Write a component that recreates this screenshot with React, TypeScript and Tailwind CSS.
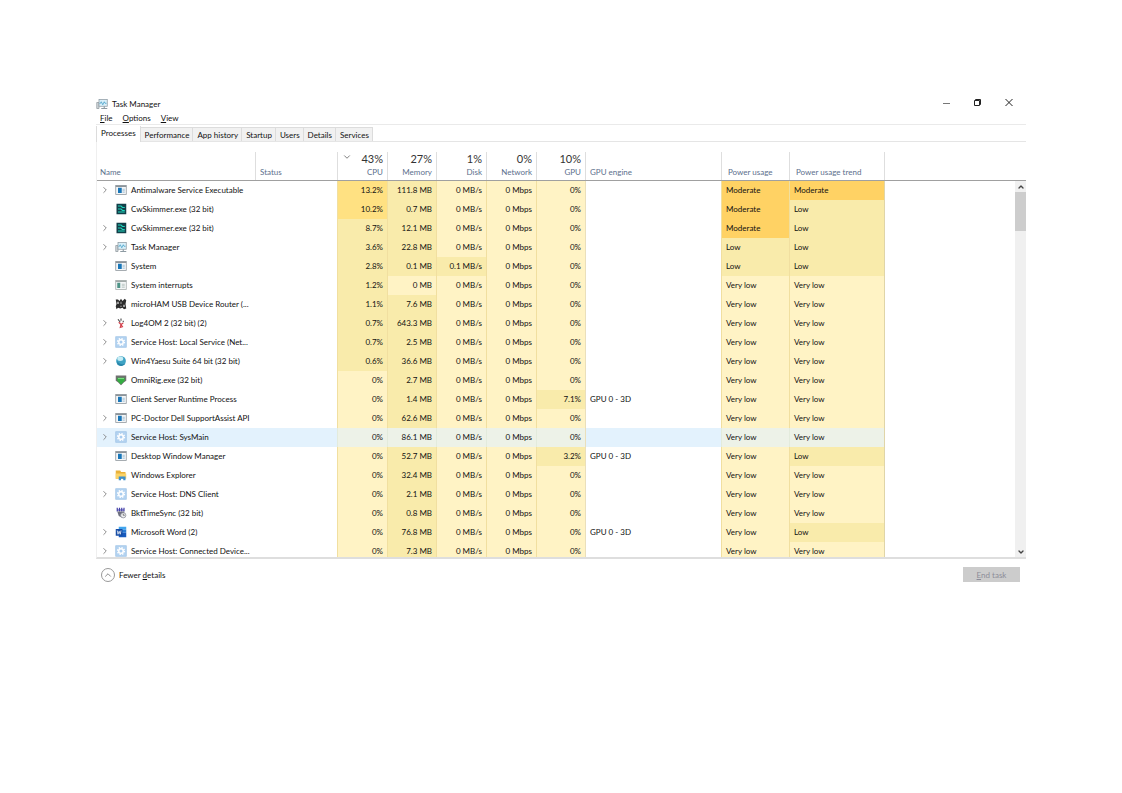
import React, { useState } from 'react';
import clsx from 'clsx';
import { ChevronDown, ChevronRight, ChevronUp } from 'lucide-react';

type IconKind =
  | 'app' | 'idle' | 'skimmer' | 'taskmgr' | 'microham' | 'log4om' | 'service'
  | 'globe' | 'omnirig' | 'folder' | 'bkt' | 'word';

type Heat = 'none' | 'low' | 'high' | 'moderate';

interface Process {
  name: string;
  icon: IconKind;
  group?: boolean;
  cpu: string;
  memory: string;
  disk?: string;
  gpu?: string;
  engine?: string;
  power?: string;
  trend?: string;
}

const processes: Process[] = [
  { name: 'Antimalware Service Executable', icon: 'app', group: true, cpu: '13.2%', memory: '111.8 MB', power: 'Moderate', trend: 'Moderate' },
  { name: 'CwSkimmer.exe (32 bit)', icon: 'skimmer', cpu: '10.2%', memory: '0.7 MB', power: 'Moderate', trend: 'Low' },
  { name: 'CwSkimmer.exe (32 bit)', icon: 'skimmer', group: true, cpu: '8.7%', memory: '12.1 MB', power: 'Moderate', trend: 'Low' },
  { name: 'Task Manager', icon: 'taskmgr', group: true, cpu: '3.6%', memory: '22.8 MB', power: 'Low', trend: 'Low' },
  { name: 'System', icon: 'app', cpu: '2.8%', memory: '0.1 MB', disk: '0.1 MB/s', power: 'Low', trend: 'Low' },
  { name: 'System interrupts', icon: 'idle', cpu: '1.2%', memory: '0 MB' },
  { name: 'microHAM USB Device Router (...', icon: 'microham', cpu: '1.1%', memory: '7.6 MB' },
  { name: 'Log4OM 2 (32 bit) (2)', icon: 'log4om', group: true, cpu: '0.7%', memory: '643.3 MB' },
  { name: 'Service Host: Local Service (Net...', icon: 'service', group: true, cpu: '0.7%', memory: '2.5 MB' },
  { name: 'Win4Yaesu Suite 64 bit (32 bit)', icon: 'globe', group: true, cpu: '0.6%', memory: '36.6 MB' },
  { name: 'OmniRig.exe (32 bit)', icon: 'omnirig', cpu: '0%', memory: '2.7 MB' },
  { name: 'Client Server Runtime Process', icon: 'app', cpu: '0%', memory: '1.4 MB', gpu: '7.1%', engine: 'GPU 0 - 3D' },
  { name: 'PC-Doctor Dell SupportAssist API', icon: 'app', group: true, cpu: '0%', memory: '62.6 MB' },
  { name: 'Service Host: SysMain', icon: 'service', group: true, cpu: '0%', memory: '86.1 MB' },
  { name: 'Desktop Window Manager', icon: 'app', cpu: '0%', memory: '52.7 MB', gpu: '3.2%', engine: 'GPU 0 - 3D', trend: 'Low' },
  { name: 'Windows Explorer', icon: 'folder', cpu: '0%', memory: '32.4 MB' },
  { name: 'Service Host: DNS Client', icon: 'service', group: true, cpu: '0%', memory: '2.1 MB' },
  { name: 'BktTimeSync (32 bit)', icon: 'bkt', cpu: '0%', memory: '0.8 MB' },
  { name: 'Microsoft Word (2)', icon: 'word', group: true, cpu: '0%', memory: '76.8 MB', gpu: '0%', engine: 'GPU 0 - 3D', trend: 'Low' },
  { name: 'Service Host: Connected Device...', icon: 'service', group: true, cpu: '0%', memory: '7.3 MB' },
];

const tabs = ['Processes', 'Performance', 'App history', 'Startup', 'Users', 'Details', 'Services'];

const heatColors: Record<Heat, string> = {
  none: 'bg-[#fff3c5]',
  low: 'bg-[#f9ebab]',
  high: 'bg-[#ffe182]',
  moderate: 'bg-[#ffd264]',
};

const usageHeat = (value: string): Heat => {
  const n = parseFloat(value);
  if (n === 0) return 'none';
  return value.endsWith('%') && n >= 10 ? 'high' : 'low';
};

const powerHeat = (value: string): Heat => {
  if (value === 'Moderate') return 'moderate';
  return value === 'Low' ? 'low' : 'none';
};

const ProcessIcon: React.FC<{ kind: IconKind }> = ({ kind }) => (
  <svg viewBox="0 0 16 16" className="h-3 w-3 shrink-0" aria-hidden="true">
    {kind === 'app' && (
      <>
        <rect x="1" y="2" width="14" height="12" fill="#f4f6f7" stroke="#8b9399" />
        <path d="M1 3h14" stroke="#8b9399" strokeWidth="2" />
        <rect x="4" y="5" width="5" height="7" fill="#1976b8" />
        <path d="M10 7h3M10 9h3M10 11h3" stroke="#8fb4cf" />
      </>
    )}
    {kind === 'idle' && (
      <>
        <rect x="1" y="2" width="14" height="12" fill="#f4f6f7" stroke="#a2aaa9" />
        <path d="M1 3h14" stroke="#a2aaa9" strokeWidth="2" />
        <rect x="3" y="5" width="4" height="7" fill="#4d9386" />
        <path d="M9 7h4M9 9h4M9 11h4" stroke="#a9b9b4" />
      </>
    )}
    {kind === 'skimmer' && (
      <>
        <rect x="2" y="1" width="13" height="14" fill="#123f49" />
        <path d="M4 4h4l2 2h3M4 8h4l2 2h3M4 12h9" stroke="#20d8be" strokeWidth="1.5" fill="none" />
      </>
    )}
    {kind === 'taskmgr' && (
      <>
        <path d="M1 6h3v8H1z" fill="#d4d9dc" stroke="#8f999f" />
        <rect x="4" y="2" width="11" height="9" fill="#d9eff9" stroke="#8d9aa2" />
        <path d="M5 8l2-3 2 4 2-4 1 2h2" stroke="#3f9cc5" fill="none" />
        <path d="M7 14h8M11 11v3" stroke="#8d9aa2" strokeWidth="1.5" />
      </>
    )}
    {kind === 'microham' && (
      <>
        <path d="M1 2h3l2 2 2-3 2 3 3-3 2 2-1 5 1 6-3 1-2-2-3 1-3-1-2 2-1-4 1-3z" fill="#2c2c2c" />
        <path d="M4 5v3M12 9v3" stroke="#efefef" strokeWidth="1.5" />
        <path d="M8 5v3M7 11h2" stroke="#c9c9c9" />
      </>
    )}
    {kind === 'log4om' && (
      <>
        <path d="M4 3l3 4M8 2v3M11 5v2" stroke="#4b4b4b" strokeWidth="1.5" />
        <path d="M5 7l3 3 3-2M8 10l-1 4 3-1-2-3" stroke="#d3404c" strokeWidth="1.5" fill="none" />
      </>
    )}
    {kind === 'service' && (
      <>
        <rect x="1" y="1" width="14" height="14" fill="#b4d3f1" stroke="#9fc2e6" />
        <circle cx="8" cy="8" r="4.5" fill="none" stroke="#fff" strokeWidth="2" strokeDasharray="1.8 1.730" />
        <circle cx="8" cy="8" r="3" fill="#a9cdf0" stroke="#fff" strokeWidth="2" />
      </>
    )}
    {kind === 'globe' && (
      <>
        <circle cx="8" cy="8" r="6.5" fill="#3fa3c4" />
        <path d="M3 12a6.500 6.500 0 0 0 11-1c-3 2-8 2-11-3z" fill="#2a86aa" />
        <ellipse cx="7" cy="5" rx="4" ry="3" fill="#c7edf5" />
      </>
    )}
    {kind === 'omnirig' && (
      <>
        <path d="M1 2h14v7l-3 2-4 4-4-4-3-2z" fill="#707070" />
        <path d="M3 5h10v4l-5 5-5-5z" fill="#35ad43" />
        <path d="M4 6h8" stroke="#7bdc80" strokeWidth="1.5" />
      </>
    )}
    {kind === 'folder' && (
      <>
        <path d="M1 2h6l1 2h6v9H1z" fill="#e9b13a" />
        <path d="M1 6h14v7H1z" fill="#fbd367" />
        <path d="M5 15v-5h9v5h-3v-2H8v2z" fill="#3b8fd0" />
      </>
    )}
    {kind === 'bkt' && (
      <>
        <path d="M3 1v5M6 1v5M9 1v5M12 1v5M3 4h9" stroke="#4340a8" strokeWidth="1.6" />
        <path d="M3 6h9l1 5-4 3-4-2z" fill="#6e7080" />
        <circle cx="11" cy="11" r="3.500" fill="#eceef0" stroke="#888a94" />
        <path d="M11 9v2h2" stroke="#555" fill="none" />
      </>
    )}
    {kind === 'word' && (
      <>
        <path d="M5 1h10v4H5z" fill="#41a5ee" />
        <path d="M5 5h10v4H5z" fill="#2b7cd3" />
        <path d="M5 9h10v6H5z" fill="#185abd" />
        <rect x="1" y="4" width="9" height="9" fill="#174da5" />
        <path d="M3 6l1 5 1.500-4L7 11l1-5" stroke="#fff" fill="none" />
      </>
    )}
  </svg>
);

interface HeadCellProps {
  label: string;
  total?: string;
  width: string;
  sorted?: boolean;
  first?: boolean;
  pad?: string;
}

const HeadCell: React.FC<HeadCellProps> = ({ label, total, width, sorted, first, pad = 'px-1' }) => (
  <th scope="col" className={clsx('h-[39px] border-b border-[#a0a0a0] p-0 pt-[10px] align-bottom font-normal', width)}>
    <div className={clsx('flex h-7 flex-col justify-end', pad, !first && 'border-l border-[#dedede]', total ? 'text-right' : 'text-left')}>
      {total && (
        <div className="flex items-center justify-between text-[11px] leading-[14px] text-[#333]">
          <span>{sorted && <ChevronDown className="mb-1 h-[10px] w-[10px] text-[#666]" />}</span>
          <span>{total}</span>
        </div>
      )}
      <span className="pb-px leading-[13px] whitespace-nowrap text-[#5c6f8c]">{label}</span>
    </div>
  </th>
);

interface HeatCellProps {
  value: string;
  heat: Heat;
  hovered: boolean;
  left?: boolean;
}

const HeatCell: React.FC<HeatCellProps> = ({ value, heat, hovered, left }) => (
  <td
    className={clsx(
      'border-l px-1 pt-0 pb-px whitespace-nowrap',
      left ? 'text-left' : 'text-right',
      hovered ? 'border-[#e3ebdc] bg-[#edf2e8]' : clsx('border-[#f1dfa0]', heatColors[heat]),
    )}
  >
    {value}
  </td>
);

const ProcessRow: React.FC<{ process: Process; hovered: boolean }> = ({ process, hovered }) => {
  const { name, icon, group, cpu, memory, disk = '0 MB/s', gpu = '0%', engine, power = 'Very low', trend = 'Very low' } = process;

  return (
    <tr className={clsx('h-[19px]', hovered && 'bg-[#e3f2fd]')}>
      <td className="p-0 pb-px">
        <div className="flex items-center pl-[3px] whitespace-nowrap">
          <span className="flex w-[15px] shrink-0 items-center">
            {group && (
              <button type="button" aria-label={`Expand ${name}`}>
                <ChevronRight className="h-[10px] w-[10px] text-[#777]" />
              </button>
            )}
          </span>
          <ProcessIcon kind={icon} />
          <span className="pl-1">{name}</span>
        </div>
      </td>
      <td className="p-0" />
      <HeatCell value={cpu} heat={usageHeat(cpu)} hovered={hovered} />
      <HeatCell value={memory} heat={usageHeat(memory)} hovered={hovered} />
      <HeatCell value={disk} heat={usageHeat(disk)} hovered={hovered} />
      <HeatCell value="0 Mbps" heat="none" hovered={hovered} />
      <HeatCell value={gpu} heat={usageHeat(gpu)} hovered={hovered} />
      <td className="border-l border-[#eadfbb] px-1 pt-0 pb-px">{engine}</td>
      <HeatCell value={power} heat={powerHeat(power)} hovered={hovered} left />
      <HeatCell value={trend} heat={powerHeat(trend)} hovered={hovered} left />
      <td className="border-l border-[#e0d5a8] bg-white p-0" />
    </tr>
  );
};

const TitleBar: React.FC = () => (
  <header className="flex h-4 items-center justify-between pr-3">
    <h1 className="flex items-center gap-1">
      <ProcessIcon kind="taskmgr" />
      Task Manager
    </h1>
    <div className="flex items-center gap-[21px] pb-1 text-[#222]">
      <button type="button" aria-label="Minimize">
        <svg viewBox="0 0 10 10" className="h-[10px] w-[10px]"><path d="M1 6.500h7" stroke="#777" /></svg>
      </button>
      <button type="button" aria-label="Restore">
        <svg viewBox="0 0 10 10" className="h-[10px] w-[10px]" fill="none" stroke="currentColor">
          <path d="M1.500 3.500h5v5h-5zM2.500 3.500v-1h5v5h-1" />
        </svg>
      </button>
      <button type="button" aria-label="Close">
        <svg viewBox="0 0 10 10" className="h-[10px] w-[10px]"><path d="M1.500 2l7 7M8.500 2l-7 7" stroke="currentColor" /></svg>
      </button>
    </div>
  </header>
);

const App: React.FC = () => {
  const [activeTab, setActiveTab] = useState('Processes');

  return (
    <main className="min-h-screen bg-white px-24 pt-24 font-['Lato','Open_Sans',sans-serif] text-[8px] leading-3 text-[#111]">
      <TitleBar />
      <nav className="flex h-[13px] items-center gap-[10px] border-b border-[#eaeaea] pl-1">
        {['File', 'Options', 'View'].map((item) => (
          <button key={item} type="button">
            <span className="underline">{item[0]}</span>{item.slice(1)}
          </button>
        ))}
      </nav>

      <div role="tablist" className="flex h-[17px] items-end border-b border-[#e5e5e5]">
        {tabs.map((tab) => (
          <button
            key={tab}
            type="button"
            role="tab"
            aria-selected={tab === activeTab}
            onClick={() => setActiveTab(tab)}
            className={clsx(
              'border-r border-[#dcdcdc] whitespace-nowrap',
              tab === activeTab ? '-mb-px h-4 border-l bg-white px-1 pb-[2px]' : 'h-[14px] border-t bg-[#f1f1f1] pr-[3px] pl-1',
            )}
          >
            {tab}
          </button>
        ))}
      </div>

      <section className="flex h-[417px] border-b-2 border-l border-[#dedede] border-l-[#efefef]">
        <div className="min-w-0 flex-1 overflow-hidden">
          <table className="w-full table-fixed border-separate border-spacing-0">
            <thead>
              <tr>
                <HeadCell label="Name" width="w-[158px]" first pad="px-[3px]" />
                <HeadCell label="Status" width="w-[82px]" />
                <HeadCell label="CPU" total="43%" width="w-[50px]" sorted />
                <HeadCell label="Memory" total="27%" width="w-[49px]" />
                <HeadCell label="Disk" total="1%" width="w-[50px]" />
                <HeadCell label="Network" total="0%" width="w-[50px]" />
                <HeadCell label="GPU" total="10%" width="w-[49px]" />
                <HeadCell label="GPU engine" width="w-[136px]" />
                <HeadCell label="Power usage" width="w-[68px]" pad="px-[6px]" />
                <HeadCell label="Power usage trend" width="w-[95px]" pad="px-[6px]" />
                <HeadCell label="" width="w-auto" />
              </tr>
            </thead>
            <tbody>
              {processes.map((process, index) => (
                <ProcessRow key={index} process={process} hovered={process.name === 'Service Host: SysMain'} />
              ))}
            </tbody>
          </table>
        </div>
        <div className="flex w-[11px] flex-col">
          <div className="h-[39px] border-b border-[#a0a0a0]" />
          <div className="flex flex-1 flex-col bg-[#f0f0f0] text-[#444]">
            <button type="button" aria-label="Scroll up" className="flex h-[11px] items-center justify-center">
              <ChevronUp className="h-2 w-2" strokeWidth={4} />
            </button>
            <div className="h-[39px] bg-[#cdcdcd]" />
            <button type="button" aria-label="Scroll down" className="mt-auto flex h-[11px] items-center justify-center">
              <ChevronDown className="h-2 w-2" strokeWidth={4} />
            </button>
          </div>
        </div>
      </section>

      <footer className="flex items-center justify-between pt-2 pr-[6px] pl-[5px]">
        <button type="button" className="flex items-center gap-1">
          <span className="flex h-[14px] w-[14px] items-center justify-center rounded-full border border-[#999]">
            <ChevronUp className="h-[10px] w-[10px] text-[#777]" />
          </span>
          <span>Fewer <span className="underline">d</span>etails</span>
        </button>
        <button type="button" disabled className="h-[15px] w-[57px] bg-[#cccccc] text-[#8c8c99]">
          <span className="underline">E</span>nd task
        </button>
      </footer>
    </main>
  );
};

export default App;
